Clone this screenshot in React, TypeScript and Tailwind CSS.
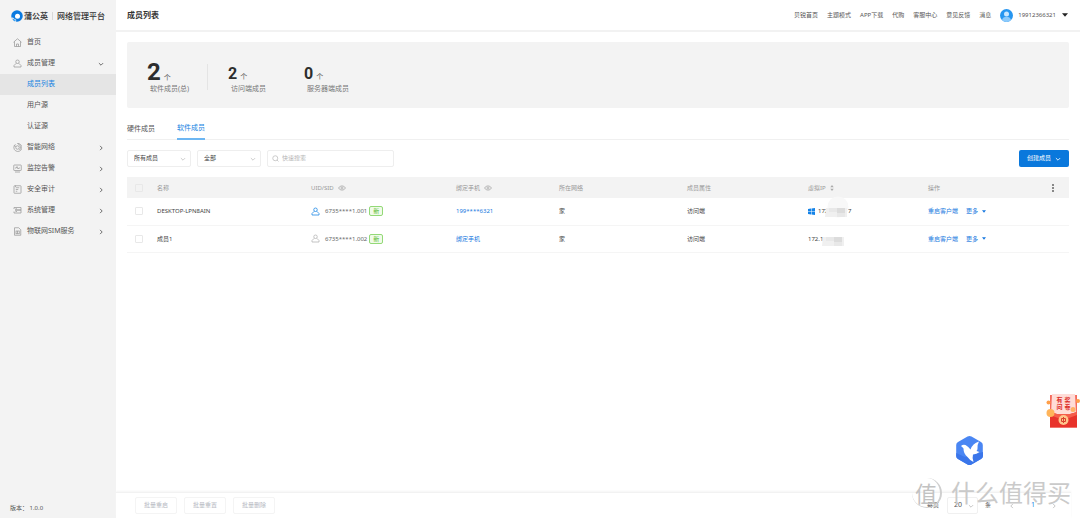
import { ReactNode } from 'react';

const topLinks = ['贝锐首页', '主题模式', 'APP下载', '代购', '客服中心', '意见反馈', '消息'];

const menu = [
  { icon: 'home', label: '首页' },
  { icon: 'user', label: '成员管理', open: true, children: ['成员列表', '用户源', '认证源'] },
  { icon: 'network', label: '智能网络', arrow: true },
  { icon: 'monitor', label: '监控告警', arrow: true },
  { icon: 'audit', label: '安全审计', arrow: true },
  { icon: 'system', label: '系统管理', arrow: true },
  { icon: 'sim', label: '物联网SIM服务', arrow: true },
];

const members = [
  { name: 'DESKTOP-LPN8AIN', uid: '6735****1.001', online: true, phone: '199****6321', network: '家', role: '访问端', ip: '172.', tail: '7' },
  { name: '成员1', uid: '6735****1.002', online: false, phone: '绑定手机', network: '家', role: '访问端', ip: '172.1', tail: '' },
];

const menuIcons: Record<string, ReactNode> = {
  home: <path d="M1 8.5 9 1.5l8 7M3 7v10h12V7M7 17v-5h4v5" />,
  user: <path d="M9 2a3.5 3.5 0 1 1 0 7 3.5 3.5 0 0 1 0-7ZM6.5 8.5 2 13v3h14v-3l-4.500-4.500" />,
  network: (
    <>
      <path d="M5 2.500A8 8 0 1 0 9 1" />
      <circle cx="9" cy="9" r="3.500" />
      <path d="M2 5l4 2M9 1a8 8 0 0 1 4 13" />
    </>
  ),
  monitor: (
    <>
      <rect x="1.500" y="2" width="15" height="11" rx="1" />
      <path d="M4 8h2.500L8 5l2 5 1.500-2H14M4 16h10" />
    </>
  ),
  audit: (
    <>
      <rect x="2" y="1.500" width="14" height="15" rx="1" />
      <path d="M5.500 5.500h7M5.500 9h5M5.500 12.500h3M5 1v3" />
    </>
  ),
  system: (
    <>
      <path d="M2 3h14v5H4M4 8h12v6H2M2 3v3M2 14v-3" />
      <path d="M5 5.500h3M5 11h3" />
    </>
  ),
  sim: (
    <>
      <path d="M3 1.500h8.500L15.500 5.500v11H3Z" />
      <rect x="6" y="8" width="6.500" height="5.500" />
      <path d="M9 8v5.500" />
    </>
  ),
};

function MenuIcon({ name }: { name: string }) {
  return (
    <svg className="size-[9px] shrink-0" viewBox="0 0 18 18" fill="none" stroke="#999" strokeWidth="1.500">
      {menuIcons[name]}
    </svg>
  );
}

function Chevron({ className = '', dir = 'down' }: { className?: string; dir?: 'down' | 'right' | 'left' }) {
  const d = { down: 'M1.500 3.500 5 7l3.500-3.500', right: 'M3.500 1.500 7 5 3.500 8.500', left: 'M6.500 1.500 3 5l3.500 3.500' }[dir];
  return (
    <svg className={`size-[6px] shrink-0 ${className}`} viewBox="0 0 10 10" fill="none" stroke="currentColor" strokeWidth="1.400">
      <path d={d} />
    </svg>
  );
}

function Caret({ className = '' }: { className?: string }) {
  return (
    <svg className={`shrink-0 ${className}`} viewBox="0 0 10 6" fill="currentColor">
      <path d="M0 0h10L5 6Z" />
    </svg>
  );
}

function Eye() {
  return (
    <svg className="h-[6px] w-[8px]" viewBox="0 0 16 12" fill="none" stroke="#b0b0b0" strokeWidth="1.800">
      <path d="M1 6c3.500-5.500 10.500-5.500 14 0-3.500 5.500-10.500 5.500-14 0Z" />
      <circle cx="8" cy="6" r="2" />
    </svg>
  );
}

function Sidebar() {
  return (
    <aside className="flex w-[116px] shrink-0 flex-col bg-[#f3f3f3] text-[7px] text-[#555]">
      <div className="flex h-8 items-center pl-[11px] text-[8px] text-[#333]">
        <svg className="mr-px size-3 shrink-0" viewBox="0 0 24 24">
          <circle cx="12" cy="12" r="11.500" fill="#0a7ae0" />
          <circle cx="13" cy="12.500" r="5" fill="#fff" />
          <path d="M1 15c5-1 5 4 9 4 1 2 0 4-1 5C4 22.500 1 19 1 15Z" fill="#f3f3f3" />
          <path d="M3 17c3 0 4 3 7 4-1 1-2 2-3 1.500-2-1-4-3-4-5.500Z" fill="#39a0f2" />
        </svg>
        <span className="font-bold text-[#444]">蒲公英</span>
        <span className="mx-1 h-2 w-px bg-[#d8d8d8]" />
        <span className="font-medium">网络管理平台</span>
      </div>
      <nav>
        {menu.map((item) => (
          <div key={item.label}>
            <a href="#" className="flex h-[21px] items-center gap-[5px] pr-3 pl-[13px]">
              <MenuIcon name={item.icon} />
              <span className="flex-1">{item.label}</span>
              {item.open && <Chevron />}
              {item.arrow && <Chevron dir="right" />}
            </a>
            {item.children?.map((child, i) => (
              <a
                key={child}
                href="#"
                className={`flex h-[21px] items-center pl-[27px] ${i === 0 ? 'bg-[#e5e5e5] text-[#1683e2]' : ''}`}
              >
                {child}
              </a>
            ))}
          </div>
        ))}
      </nav>
      <div className="mt-auto px-[10px] pb-[5px] text-[6px] leading-[10px]">版本：&nbsp;1.0.0</div>
    </aside>
  );
}

function TopBar() {
  return (
    <header className="flex h-8 items-center justify-between border-b-2 border-[#f2f2f2] pr-3 pl-[11px]">
      <h1 className="text-[8px] font-bold text-[#333]">成员列表</h1>
      <div className="flex items-center text-[6px] text-[#555]">
        <nav className="flex gap-[9px]">
          {topLinks.map((l) => (
            <a key={l} href="#">{l}</a>
          ))}
        </nav>
        <svg className="mr-[5px] ml-[9px] size-[13px]" viewBox="0 0 26 26">
          <circle cx="13" cy="13" r="13" fill="#2796f0" />
          <circle cx="13" cy="10" r="5" fill="#cbe7ff" />
          <path d="M4 22c1-9 17-9 18 0-5 5-13 5-18 0Z" fill="#8ccafb" />
        </svg>
        <button className="flex items-center gap-[6px]">
          19912366321
          <Caret className="h-[4px] w-[6px] text-[#222]" />
        </button>
      </div>
    </header>
  );
}

function Stat({ value, label, big = false }: { value: string; label: string; big?: boolean }) {
  return (
    <div>
      <div className="flex h-6 items-baseline gap-[3px] text-[#2d2d2d]">
        <span className={`font-[Roboto] font-bold ${big ? 'text-2xl/6' : 'text-base/7'}`}>{value}</span>
        <span className="text-[7px] text-[#555]">个</span>
      </div>
      <div className="pl-[3px] text-[7px] leading-[10px] text-[#777]">{label}</div>
    </div>
  );
}

function Filter({ label, value }: { label: string; value: string }) {
  return (
    <div className="relative">
      <select
        aria-label={label}
        className="block h-[17px] w-16 appearance-none rounded-xs border border-[#eee] bg-white pl-[6px] text-[6px] text-[#444]"
      >
        <option>{value}</option>
      </select>
      <Chevron className="pointer-events-none absolute top-[6px] right-[5px] text-[#c4c4c4]" />
    </div>
  );
}

function Check({ label }: { label: string }) {
  return (
    <input
      type="checkbox"
      aria-label={label}
      className="block size-2 appearance-none rounded-[1px] border border-[#e8e8e8] bg-transparent"
    />
  );
}

function Mosaic({ round = false }: { round?: boolean }) {
  return (
    <svg
      className={`pointer-events-none absolute h-8 w-6 ${round ? 'top-[-10px] left-[17px]' : 'top-[-9px] left-[14px]'}`}
      viewBox="0 0 24 32"
    >
      {round && <circle cx="13" cy="11" r="10.500" fill="#f8f8f8" />}
      <path d="M1 12h21v9H0Z" fill="#f0f0f0" />
      <path d="M4 12h8v4H4ZM12 17h8v4h-8Z" fill="#e8e8e8" />
      <path d="M12 12h8v5h-8Z" fill="#dcdcdc" />
    </svg>
  );
}

function MemberTable() {
  return (
    <table className="mt-[10px] w-full table-fixed text-left text-[6px] leading-[10px] text-[#444]">
      <colgroup>
        <col className="w-[30px]" />
        <col className="w-[154px]" />
        <col className="w-[145px]" />
        <col className="w-[103px]" />
        <col className="w-[128px]" />
        <col className="w-[121px]" />
        <col className="w-[120px]" />
        <col className="w-[141px]" />
      </colgroup>
      <thead className="bg-[#f3f3f3] text-[#999]">
        <tr className="h-[21px] [&>th]:font-normal">
          <th className="pl-2"><Check label="全选" /></th>
          <th>名称</th>
          <th><span className="flex items-center gap-1">UID/SID <Eye /></span></th>
          <th><span className="flex items-center gap-1">绑定手机 <Eye /></span></th>
          <th>所在网络</th>
          <th>成员属性</th>
          <th>
            <span className="flex items-center gap-1">
              虚拟IP
              <svg className="h-[6px] w-1" viewBox="0 0 8 12" fill="#aaa">
                <path d="M4 0l3.500 4.500h-7ZM4 12 .500 7.500h7Z" />
              </svg>
            </span>
          </th>
          <th>
            <span className="flex items-center justify-between pr-[14px]">
              操作
              <button aria-label="列设置" className="block">
                <svg className="h-2 w-[4px]" viewBox="0 0 4 8" fill="#888">
                  <path d="M1 0h2v2H1ZM1 3h2v2H1ZM1 6h2v2H1Z" />
                </svg>
              </button>
            </span>
          </th>
        </tr>
      </thead>
      <tbody>
        {members.map((m) => (
          <tr key={m.uid} className="h-[27px] border-b border-[#f5f5f5]">
            <td className="pl-2"><Check label={m.name} /></td>
            <td>{m.name}</td>
            <td>
              <span className="flex items-center text-[#666]">
                <svg className="mr-[5px] size-[9px]" viewBox="0 0 18 18" fill="none" stroke={m.online ? '#1e88e5' : '#b5b5b5'} strokeWidth="1.600">
                  {menuIcons.user}
                </svg>
                {m.uid}
                <span className="ml-[2px] rounded-xs border border-[#93d977] bg-[#f0fbe9] px-[3px] leading-[8px] text-[#55b82d]">新</span>
              </span>
            </td>
            <td><a href="#" className="text-[#1778e0]">{m.phone}</a></td>
            <td>{m.network}</td>
            <td>{m.role}</td>
            <td>
              <span className="relative flex items-center">
                {m.online && (
                  <svg className="mr-[3px] size-[7px]" viewBox="0 0 14 14" fill="#1583e8">
                    <path d="M0 2l6-1v5.500H0ZM7 1l7-1v6.500H7ZM0 7.500h6V13l-6-1ZM7 7.500h7V14l-7-1Z" />
                  </svg>
                )}
                {m.ip}
                {m.tail && <span className="ml-[18px]">{m.tail}</span>}
                <Mosaic round={m.online} />
              </span>
            </td>
            <td>
              <span className="flex items-center gap-2 text-[#1778e0]">
                <a href="#">重启客户端</a>
                <button className="flex items-center gap-[4px]">更多 <Caret className="h-[3px] w-[4px]" /></button>
              </span>
            </td>
          </tr>
        ))}
      </tbody>
    </table>
  );
}

function FooterBar() {
  return (
    <footer className="mt-auto mr-[9px] flex h-[26px] items-center justify-between border-t border-[#f2f2f2] bg-white pr-[14px] pl-[19px] text-[6px] shadow-[0_-1px_2px_#f5f5f5]">
      <div className="flex gap-[7px]">
        {['批量重启', '批量重置', '批量删除'].map((b) => (
          <button key={b} disabled className="h-[17px] rounded-xs border border-[#f4f4f4] px-2 text-[#b5b8bf]">{b}</button>
        ))}
      </div>
      <div className="flex items-center text-[#555]">
        <label htmlFor="page-size" className="mr-2">每页</label>
        <div className="relative">
          <select id="page-size" className="block h-[17px] w-[31px] appearance-none rounded-xs border border-[#f0f0f0] bg-white pl-[6px] text-[7px]">
            <option>20</option>
          </select>
          <Chevron className="pointer-events-none absolute top-[6px] right-1 text-[#bbb]" />
        </div>
        <span className="ml-[7px]">条</span>
        <button aria-label="上一页" className="ml-[18px] text-[#bbb]"><Chevron dir="left" /></button>
        <button className="mx-[16px] text-[7px] text-[#1e88e5]">1</button>
        <button aria-label="下一页" className="text-[#bbb]"><Chevron dir="right" /></button>
      </div>
    </footer>
  );
}

function SurveyBadge() {
  return (
    <button aria-label="有奖问卷" className="absolute right-0 bottom-[89px] h-9 w-[34px]">
      <svg className="size-full" viewBox="0 0 34 36">
        <path d="M4 2h27v32.500H4Z" fill="#f66a5c" />
        <path d="M6 1h23l1 20H5Z" fill="#ffdcd7" />
        <path d="M4 19l7 2h13l7-2v15.500H4Z" fill="#e8332b" />
        <path d="M4 19l7 2h13l7-2v3l-8 3H12l-8-3Z" fill="#f55d4b" />
        <circle cx="17.500" cy="27" r="5" fill="#ffc48c" />
        <path d="M15.500 25.500h4v3h-4ZM17.500 24v6" stroke="#d9402c" strokeWidth="1" fill="none" />
        <circle cx="4.500" cy="20" r="4" fill="#ffb45a" />
        <circle cx="2.500" cy="9.500" r="2" fill="#ff9f4a" />
        <circle cx="32" cy="8" r="2" fill="#ff9f4a" />
        <circle cx="27" cy="16.500" r="2.500" fill="#ffb066" />
      </svg>
      <span className="absolute inset-x-0 top-[4px] grid grid-cols-[6px_6px] justify-center gap-x-[2px] pl-px text-[6px] leading-[7px] font-bold text-[#dc2c26]">
        <span>有</span>
        <span>奖</span>
        <span>问</span>
        <span>卷</span>
      </span>
    </button>
  );
}

function BirdBadge() {
  return (
    <a href="#" aria-label="蒲公英助手" className="absolute right-[96px] bottom-[52px] block">
      <svg className="h-[31px] w-[29px]" viewBox="0 0 29 31">
        <path d="M12.500 1.500q2-1 4 0l9.500 5.500q1.800 1 1.800 3v11q0 2-1.800 3l-9.500 5.500q-2 1-4 0L3 24q-1.800-1-1.800-3V10q0-2 1.800-3Z" fill="#4a86f3" />
        <path d="M1.200 18 10 22l18-5v4q0 2-2 3l-9.500 5.500q-2 1-4 0L3 24q-1.800-1-1.800-3Z" fill="#3b76ea" />
        <path d="M6 11q2-2 4.500-1 3 1.500 5 4.500 2-6 8.500-8-2 3.500-1.500 7 0 1.500-1 2.500l3 1q-3 2-6.500 2.500-1 3 .500 7.500-4-2-6-5-4-3-4-8.500-1-1.500-2.500-2.500Z" fill="#fff" />
      </svg>
    </a>
  );
}

function Watermark() {
  return (
    <div className="pointer-events-none absolute right-[9px] bottom-[9px] flex items-center gap-[9px] text-[24px] leading-8 font-normal text-[#cacaca]">
      <span className="flex size-[30px] items-center justify-center rounded-full border-r-2 border-b border-[#cfcfcf] text-[22px] text-[#c2c2c2]">值</span>
      什么值得买
    </div>
  );
}

export default function App() {
  return (
    <div className="relative flex min-h-screen w-full bg-white font-['Noto_Sans','Noto_Sans_CJK_SC',sans-serif]">
      <Sidebar />
      <main className="flex min-w-0 flex-1 flex-col">
        <TopBar />
        <div className="px-[11px] pt-[10px]">
          <section className="flex h-[66px] items-start rounded-xs bg-[#f3f3f3] pt-[18px] pl-5">
            <div className="w-[60px]"><Stat big value="2" label="软件成员(总)" /></div>
            <div className="mt-1 h-[26px] w-px bg-[#e4e4e4]" />
            <div className="w-24 pl-5"><Stat value="2" label="访问端成员" /></div>
            <div><Stat value="0" label="服务器端成员" /></div>
          </section>

          <div role="tablist" className="mt-[11px] flex gap-[22px] border-b border-[#f0f0f0] text-[7px] text-[#555]">
            <button role="tab" aria-selected={false} className="h-5">硬件成员</button>
            <button role="tab" aria-selected className="-mb-px h-[21px] border-b-2 border-[#6db6f2] text-[#1683e2]">软件成员</button>
          </div>

          <div className="mt-[10px] flex items-center gap-[6px]">
            <Filter label="成员" value="所有成员" />
            <Filter label="状态" value="全部" />
            <label className="flex h-[17px] w-[127px] items-center gap-[3px] rounded-xs border border-[#eee] px-1">
              <svg className="size-[7px] shrink-0" viewBox="0 0 14 14" fill="none" stroke="#bbb" strokeWidth="1.500">
                <circle cx="6.500" cy="6.500" r="5" />
                <path d="m10 10 3 3" />
              </svg>
              <input aria-label="快速搜索" placeholder="快速搜索" className="w-full text-[6px] outline-none placeholder:text-[#b5b5b5]" />
            </label>
            <button className="ml-auto flex h-[17px] items-center gap-1 rounded-xs bg-[#0a78dc] px-2 text-[6px] text-white">
              创建成员 <Chevron />
            </button>
          </div>

          <MemberTable />
        </div>
        <FooterBar />
      </main>
      <SurveyBadge />
      <BirdBadge />
      <Watermark />
    </div>
  );
}
